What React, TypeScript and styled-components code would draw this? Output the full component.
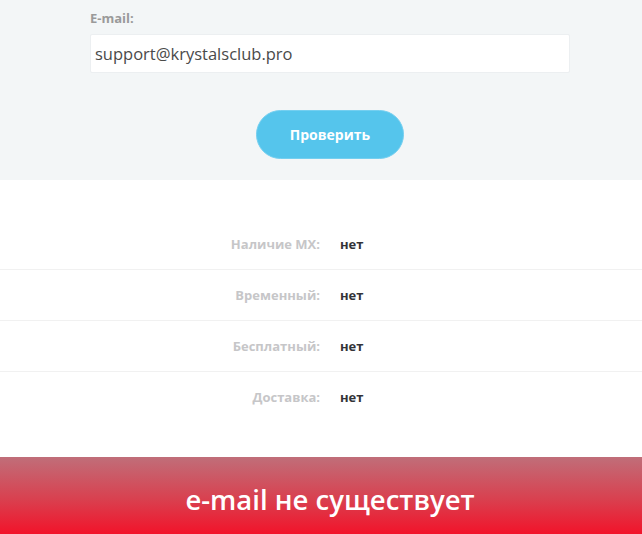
import styled, { createGlobalStyle } from "styled-components";

const GlobalStyle = createGlobalStyle`
  html, body {
    margin: 0;
    padding: 0;
    background: #ffffff;
    font-family: "Open Sans", "Liberation Sans", sans-serif;
  }
  * {
    box-sizing: border-box;
  }
`;

const Page = styled.div`
  width: 642px;
  height: 534px;
  overflow: hidden;
  display: flex;
  flex-direction: column;
`;

const CheckForm = styled.form`
  background: #f3f6f7;
  padding: 10px 72px 21px 90px;
  display: flex;
  flex-direction: column;
`;

const FieldLabel = styled.label`
  font-family: "Open Sans", sans-serif;
  font-weight: 700;
  font-size: 13px;
  line-height: 17px;
  color: #9a9a9a;
  margin-bottom: 7px;
`;

const EmailInput = styled.input`
  width: 480px;
  height: 39px;
  border: 1px solid #eceff1;
  border-radius: 2px;
  background: #ffffff;
  padding: 0 4px;
  font-family: "Open Sans", sans-serif;
  font-size: 16.5px;
  color: #4a4a4a;
  outline: none;
`;

const SubmitButton = styled.button`
  align-self: flex-start;
  margin: 37px 0 0 166px;
  width: 148px;
  height: 49px;
  border-radius: 25px;
  border: 1px solid #74cff0;
  background: #55c5ec;
  color: #ffffff;
  font-family: "Open Sans", sans-serif;
  font-weight: 700;
  font-size: 14px;
  cursor: pointer;
`;

const Results = styled.div`
  flex: 1;
  padding: 39px 0 34px;
  display: flex;
  flex-direction: column;
`;

const ResultRow = styled.div<{ $last?: boolean }>`
  display: grid;
  grid-template-columns: 1fr 1fr;
  align-items: center;
  height: ${(p) => (p.$last ? "50px" : "51px")};
  border-bottom: ${(p) => (p.$last ? "none" : "1px solid #f1f1f1")};
  font-family: "Open Sans", sans-serif;
  font-weight: 700;
  font-size: 13px;
`;

const ResultLabel = styled.span`
  text-align: right;
  padding-right: 1px;
  color: #c6c6c8;
`;

const ResultValue = styled.span`
  padding-left: 19px;
  color: #333338;
`;

const StatusBanner = styled.div`
  height: 77px;
  flex-shrink: 0;
  background: linear-gradient(to bottom, #c06e79 0%, #d9404f 55%, #f2132a 100%);
  color: #ffffff;
  text-align: center;
  padding: 24px 0 0 18px;
  font-family: "Open Sans", sans-serif;
  font-weight: 600;
  font-size: 27.5px;
  line-height: 38px;
`;

const rows = [
  { label: "Наличие MX:", value: "нет" },
  { label: "Временный:", value: "нет" },
  { label: "Бесплатный:", value: "нет" },
  { label: "Доставка:", value: "нет" },
];

export default function App() {
  return (
    <>
      <GlobalStyle />
      <Page>
        <CheckForm onSubmit={(e) => e.preventDefault()}>
          <FieldLabel>E-mail:</FieldLabel>
          <EmailInput defaultValue="support@krystalsclub.pro" />
          <SubmitButton type="submit">Проверить</SubmitButton>
        </CheckForm>
        <Results>
          {rows.map((row, i) => (
            <ResultRow key={row.label} $last={i === rows.length - 1}>
              <ResultLabel>{row.label}</ResultLabel>
              <ResultValue>{row.value}</ResultValue>
            </ResultRow>
          ))}
        </Results>
        <StatusBanner>e-mail не существует</StatusBanner>
      </Page>
    </>
  );
}
